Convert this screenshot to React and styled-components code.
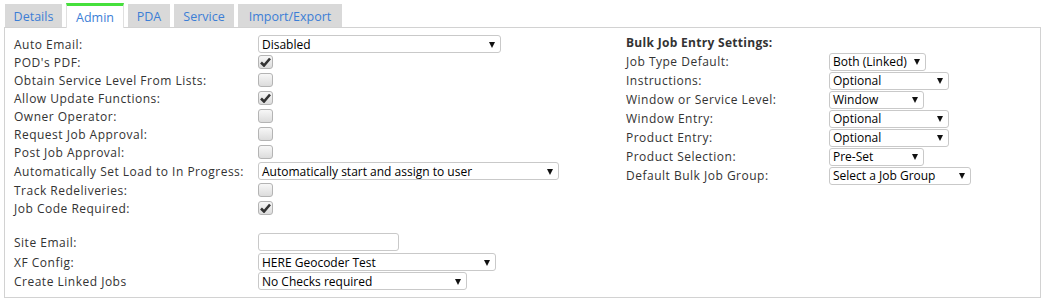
import React from "react";
import styled, { createGlobalStyle } from "styled-components";

const Global = createGlobalStyle`
  html, body { margin: 0; padding: 0; background: #fff; }
  body { font-family: "Open Sans", "Noto Sans", sans-serif; }
`;

const Page = styled.div`
  padding: 3px 5px 0 4px;
  width: 1037px;
`;

const Tabs = styled.div`
  display: flex;
  gap: 4px;
  padding-left: 1px;
  height: 24px;
  align-items: flex-end;
`;

const Tab = styled.div`
  box-sizing: border-box;
  width: ${(p) => p.$w}px;
  height: ${(p) => (p.$active ? "25px" : "23px")};
  display: flex;
  align-items: center;
  justify-content: center;
  font-size: 12.5px;
  color: #3c7ed6;
  background: ${(p) => (p.$active ? "#fff" : "#d9d9d9")};
  border-top: ${(p) => (p.$active ? "3px solid #46e03c" : "none")};
  border-left: ${(p) => (p.$active ? "1px solid #e0e0e0" : "none")};
  border-right: ${(p) => (p.$active ? "1px solid #e0e0e0" : "none")};
  margin-bottom: ${(p) => (p.$active ? "-1px" : "0")};
  padding-top: ${(p) => (p.$active ? "0" : "1px")};
  position: relative;
  z-index: 1;
`;

const Panel = styled.div`
  box-sizing: border-box;
  border: 1px solid #d2d2d2;
  height: 271px;
  padding: 7px 9px 0 9px;
  display: flex;
`;

const LeftCol = styled.div`
  width: 612px;
  display: flex;
  flex-direction: column;
`;

const RightCol = styled.div`
  display: flex;
  flex-direction: column;
`;

const Row = styled.div`
  display: grid;
  grid-template-columns: ${(p) => p.$label}px auto;
  align-items: center;
  height: ${(p) => p.$h || 18}px;
  margin-top: ${(p) => p.$mt || 0}px;
`;

const Label = styled.div`
  font-size: 12px;
  letter-spacing: 0.5px;
  color: #333;
  white-space: nowrap;
`;

const Title = styled.div`
  font-size: 12px;
  font-weight: 700;
  letter-spacing: 0.3px;
  color: #333;
  height: 17px;
  line-height: 16px;
`;

const Select = styled.div`
  box-sizing: border-box;
  width: ${(p) => p.$w}px;
  height: 18px;
  border: 1px solid #c9c9c9;
  border-radius: 3px;
  background: #fff;
  display: flex;
  align-items: center;
  justify-content: space-between;
  padding: 0 5px 0 3px;
  font-size: 12px;
  color: #000;
  white-space: nowrap;
`;

const Arrow = styled.span`
  width: 0;
  height: 0;
  border-left: 3.5px solid transparent;
  border-right: 3.5px solid transparent;
  border-top: 6px solid #111;
  margin-top: 1px;
`;

const Input = styled.div`
  box-sizing: border-box;
  width: ${(p) => p.$w}px;
  height: 18px;
  border: 1px solid #c9c9c9;
  border-radius: 3px;
  background: #fff;
`;

const Box = styled.div`
  box-sizing: border-box;
  width: 15px;
  height: 14px;
  border: 1px solid #b4b4b4;
  border-radius: 3px;
  background: linear-gradient(#f7f7f7, #dcdcdc);
  display: flex;
  align-items: center;
  justify-content: center;
`;

const Check = ({ on }) => (
  <Box>
    {on && (
      <svg width="11" height="10" viewBox="0 0 11 10">
        <path d="M1 5.5 L4 8.5 L10 1.5" fill="none" stroke="#333" strokeWidth="2.6" strokeLinejoin="miter" />
      </svg>
    )}
  </Box>
);

const Sel = ({ w, children }) => (
  <Select $w={w}>
    <span>{children}</span>
    <Arrow />
  </Select>
);

const leftRows = [
  { l: "Auto Email:", c: <Sel w={243}>Disabled</Sel> },
  { l: "POD's PDF:", c: <Check on /> },
  { l: "Obtain Service Level From Lists:", c: <Check /> },
  { l: "Allow Update Functions:", c: <Check on /> },
  { l: "Owner Operator:", c: <Check /> },
  { l: "Request Job Approval:", c: <Check /> },
  { l: "Post Job Approval:", c: <Check /> },
  { l: "Automatically Set Load to In Progress:", c: <Sel w={301}>Automatically start and assign to user</Sel>, h: 20 },
  { l: "Track Redeliveries:", c: <Check /> },
  { l: "Job Code Required:", c: <Check on /> },
  { l: "Site Email:", c: <Input $w={141} />, h: 20, mt: 15 },
  { l: "XF Config:", c: <Sel w={238}>HERE Geocoder Test</Sel>, h: 20 },
  { l: "Create Linked Jobs", c: <Sel w={209}>No Checks required</Sel>, h: 18 },
];

const rightRows = [
  { l: "Job Type Default:", c: <Sel w={97}>Both (Linked)</Sel> },
  { l: "Instructions:", c: <Sel w={120}>Optional</Sel> },
  { l: "Window or Service Level:", c: <Sel w={95}>Window</Sel> },
  { l: "Window Entry:", c: <Sel w={120}>Optional</Sel> },
  { l: "Product Entry:", c: <Sel w={120}>Optional</Sel> },
  { l: "Product Selection:", c: <Sel w={95}>Pre-Set</Sel> },
  { l: "Default Bulk Job Group:", c: <Sel w={142}>Select a Job Group</Sel> },
];

export default function App() {
  return (
    <Page>
      <Global />
      <Tabs>
        <Tab $w={57}>Details</Tab>
        <Tab $active $w={58}>Admin</Tab>
        <Tab $w={42}>PDA</Tab>
        <Tab $w={60}>Service</Tab>
        <Tab $w={104}>Import/Export</Tab>
      </Tabs>
      <Panel>
        <LeftCol>
          {leftRows.map((r) => (
            <Row key={r.l} $label={244} $h={r.h} $mt={r.mt}>
              <Label>{r.l}</Label>
              {r.c}
            </Row>
          ))}
        </LeftCol>
        <RightCol>
          <Title>Bulk Job Entry Settings:</Title>
          {rightRows.map((r) => (
            <Row key={r.l} $label={203} $h={19}>
              <Label>{r.l}</Label>
              {r.c}
            </Row>
          ))}
        </RightCol>
      </Panel>
    </Page>
  );
}
